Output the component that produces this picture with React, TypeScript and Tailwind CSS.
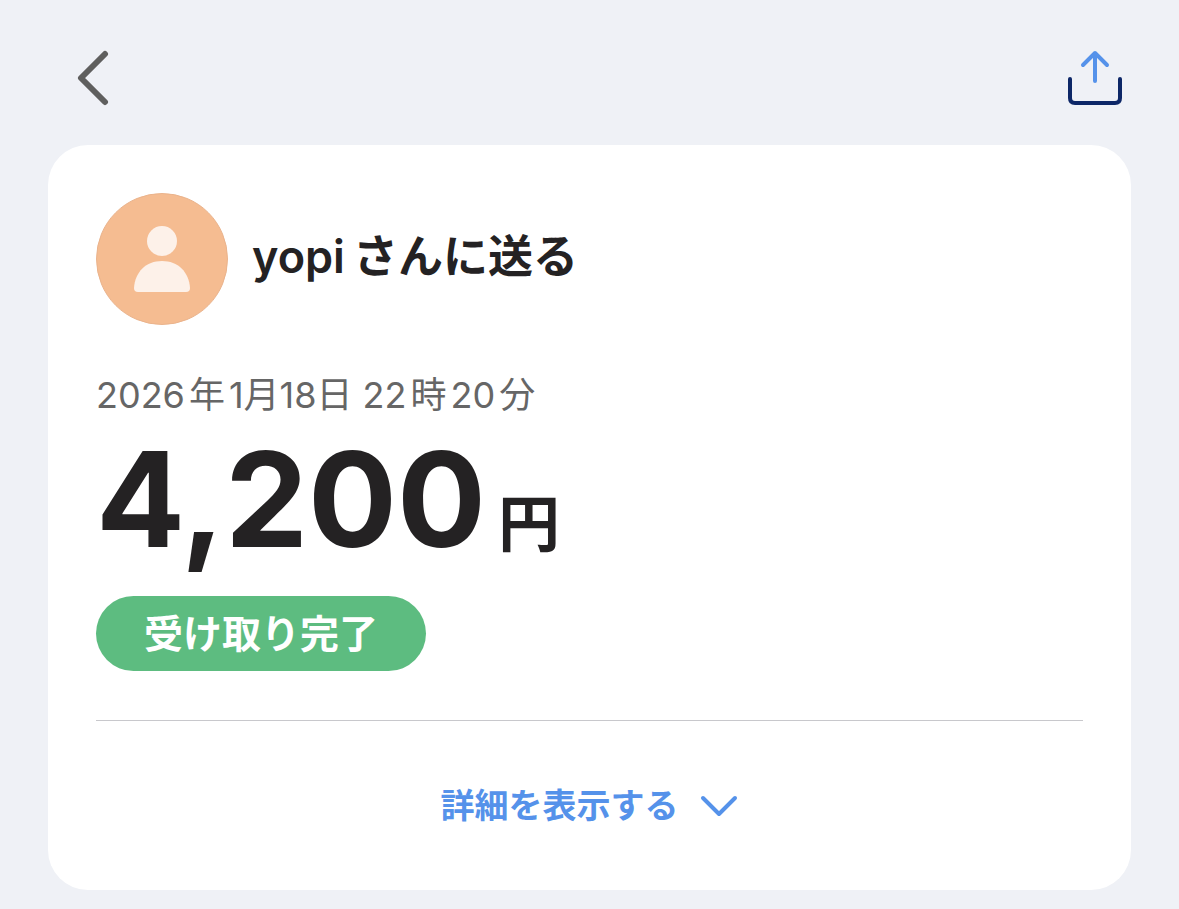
export default function App() {
  return (
    <div className="min-h-screen bg-[#eff1f6] px-12 pb-5 font-['Inter','Noto_Sans_CJK_JP',sans-serif] text-[#242223]">
      <header className="flex h-[145px] items-center justify-between pt-[10px] pr-2 pl-7">
        <button type="button" aria-label="戻る" className="text-[#5f5f5e]">
          <svg width="34" height="56" viewBox="0 0 34 56" fill="none" stroke="currentColor" strokeWidth="6" strokeLinecap="round" strokeLinejoin="round">
            <path d="M29 4 5 28l24 24" />
          </svg>
        </button>
        <button type="button" aria-label="共有">
          <svg width="56" height="56" viewBox="0 0 56 56" fill="none" strokeWidth="4" strokeLinecap="round" strokeLinejoin="round">
            <path d="M3 29v19q0 5 5 5h40q5 0 5-5V29" stroke="#0d2767" />
            <path d="M28 31V3M16 15 28 3l12 12" stroke="#5592ea" />
          </svg>
        </button>
      </header>

      <main className="rounded-[40px] bg-white p-12">
        <div className="flex items-center gap-6">
          <svg className="size-33 shrink-0" viewBox="0 0 132 132" aria-hidden="true">
            <circle cx="66" cy="66" r="65.5" fill="#f5bc91" stroke="#eab38c" />
            <circle cx="66" cy="48" r="15" fill="#fdf1e9" />
            <path d="M38 95C39 79 50 68 66 68s27 11 28 27q0 4-4 4H42q-4 0-4-4Z" fill="#fdf1e9" />
          </svg>
          <h1 className="flex items-baseline gap-2 pb-1 text-[45px] leading-[52px] font-semibold">
            <span>yopi</span>
            <span>さんに送る</span>
          </h1>
        </div>

        <p className="mt-[50px] flex items-baseline gap-1 text-[36px] leading-10 text-[#666]">
          <span>2026</span>
          <span>年</span>
          <span>1月18日</span>
          <span className="ml-1.5">22</span>
          <span>時</span>
          <span>20</span>
          <span>分</span>
        </p>

        <p className="mt-[18px] flex items-baseline gap-3 font-bold">
          <span className="text-[132px] leading-[132px]">4,200</span>
          <span className="text-[62px] leading-[64px]">円</span>
        </p>

        <p className="mt-[31px] w-fit rounded-full bg-[#5dbc80] px-12 text-[39px] leading-[75px] font-bold text-white">
          受け取り完了
        </p>

        <hr className="mt-[49px] border-[#c8c8cc]" />

        <div className="flex justify-center pt-[60px] pb-[11px]">
          <button type="button" className="flex items-center gap-5 text-[34px] leading-[50px] font-bold text-[#5592ea]">
            <span>詳細を表示する</span>
            <svg width="40" height="24" viewBox="0 0 40 24" fill="none" stroke="currentColor" strokeWidth="4" strokeLinecap="round" strokeLinejoin="round" aria-hidden="true">
              <path d="m4 4 16 16L36 4" />
            </svg>
          </button>
        </div>
      </main>
    </div>
  );
}
